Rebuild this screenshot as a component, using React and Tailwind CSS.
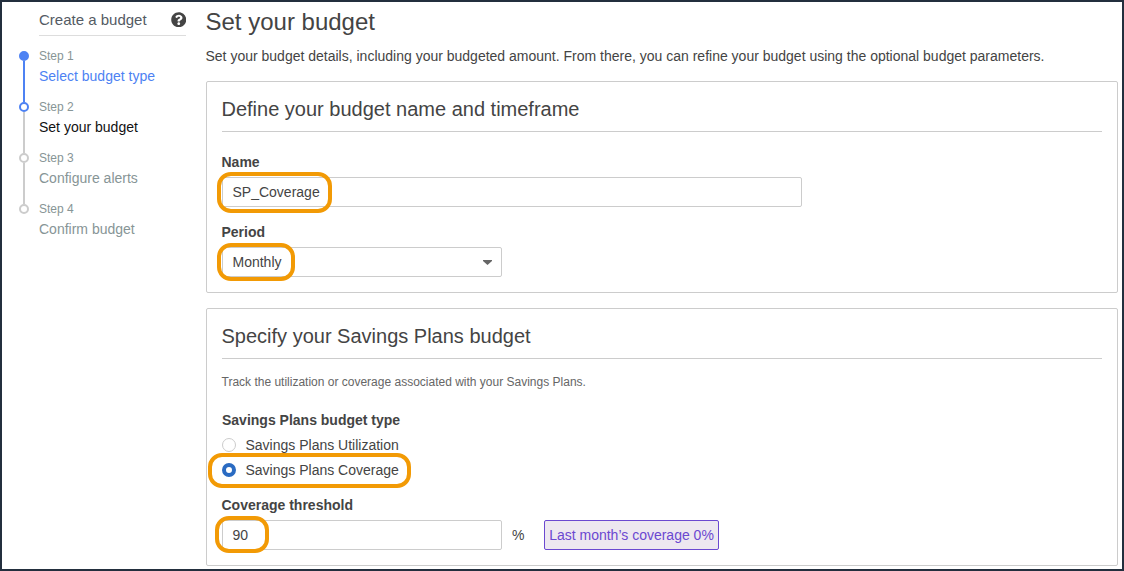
import { FaQuestionCircle } from "react-icons/fa";

const steps = [
  { label: "Step 1", title: "Select budget type", color: "text-[#4d82f3]", dot: "border-[#4d82f3] bg-[#4d82f3]", line: "bg-[#4d82f3]" },
  { label: "Step 2", title: "Set your budget", color: "text-[#111111]", dot: "border-[#4d82f3] bg-white", line: "bg-[#cccccc]" },
  { label: "Step 3", title: "Configure alerts", color: "text-[#879596]", dot: "border-[#cccccc] bg-white", line: "bg-[#cccccc]" },
  { label: "Step 4", title: "Confirm budget", color: "text-[#879596]", dot: "border-[#cccccc] bg-white", line: null },
];

function Highlight({ className }) {
  return <span className={`pointer-events-none absolute border-4 border-[#f29a05] ${className}`} />;
}

function Sidebar() {
  return (
    <aside className="w-[204px] shrink-0 pl-[17px] pr-5">
      <div className="ml-5 flex h-[34px] items-center justify-between border-b border-[#dddddd] pt-0.5 text-[15px] text-[#545b64]">
        <span>Create a budget</span>
        <FaQuestionCircle className="size-[15.5px] text-[#444444]" />
      </div>
      <ol className="mt-[11px]">
        {steps.map((s) => (
          <li key={s.label} className="flex h-[51px] gap-[10px]">
            <div className="flex w-[10px] flex-col items-center pt-1">
              <span className={`size-[10px] shrink-0 rounded-full border-2 ${s.dot}`} />
              {s.line && <span className={`-mb-1 w-0.5 flex-1 ${s.line}`} />}
            </div>
            <div className="whitespace-nowrap">
              <div className="text-xs leading-[18px] text-[#879596]">{s.label}</div>
              <div className={`text-sm leading-[22px] ${s.color}`}>{s.title}</div>
            </div>
          </li>
        ))}
      </ol>
    </aside>
  );
}

function Panel({ title, className, children }) {
  return (
    <section className={`rounded-[2px] border border-[#cccccc] px-[15px] ${className}`}>
      <h2 className="flex h-[50px] items-center border-b border-[#cccccc] pt-[5px] text-xl text-[#444444]">
        <span className="-ml-[0.5px]">{title}</span>
      </h2>
      {children}
    </section>
  );
}

function Radio({ checked, children }) {
  return (
    <div className="flex h-[25px] items-center gap-[9.5px]">
      <span
        className={
          checked
            ? "size-[14px] rounded-full border-4 border-[#2a6bc2] bg-white"
            : "size-[14px] rounded-full border border-[#cccccc] bg-white"
        }
      />
      <span>{children}</span>
    </div>
  );
}

const field = "relative flex h-[30px] items-center rounded-[2px] border border-[#cccccc] pl-[9.5px]";

export default function App() {
  return (
    <div className="flex h-[571px] w-[1124px] overflow-hidden border-2 border-[#232f3e] bg-white font-['Liberation_Sans',Arial,sans-serif] text-sm text-[#444444]">
      <Sidebar />
      <main className="w-[912px] shrink-0">
        <h1 className="-ml-[0.5px] pt-0.5 text-2xl leading-9">Set your budget</h1>
        <p className="-ml-[0.5px] mt-1.5 whitespace-nowrap leading-5">
          Set your budget details, including your budgeted amount. From there, you can refine your budget using the
          optional budget parameters.
        </p>

        <Panel title="Define your budget name and timeframe" className="mt-[15px] h-[212px]">
          <div className="-ml-[0.5px] mt-5 font-bold leading-5">Name</div>
          <div className={`${field} mt-[5px] w-[580px]`}>
            SP_Coverage
            <Highlight className="-left-[6px] -top-[6px] h-[41px] w-[115px] rounded-[14px]" />
          </div>
          <div className="-ml-[0.5px] mt-[15px] font-bold leading-5">Period</div>
          <div className={`${field} mt-[5px] w-[280px] justify-between pr-[9px]`}>
            Monthly
            <svg className="h-[5px] w-[9px] text-[#666666]" viewBox="0 0 9 5" fill="currentColor">
              <path d="M0 0h9v1L4.5 5 0 1z" />
            </svg>
            <Highlight className="-left-[6px] -top-[5px] h-[38px] w-[78px] rounded-[14px]" />
          </div>
        </Panel>

        <Panel title="Specify your Savings Plans budget" className="mt-[15px] h-[258px]">
          <p className="-ml-[0.5px] mt-[14px] text-xs leading-[18px] text-[#666666]">
            Track the utilization or coverage associated with your Savings Plans.
          </p>
          <div className="mt-[19px] font-bold leading-5">Savings Plans budget type</div>
          <div className="relative mt-0.5">
            <Radio>Savings Plans Utilization</Radio>
            <Radio checked>Savings Plans Coverage</Radio>
            <Highlight className="-left-[14px] top-[21px] h-[35px] w-[203px] rounded-[14px]" />
          </div>
          <div className="-ml-[0.5px] mt-[13px] font-bold leading-5">Coverage threshold</div>
          <div className="mt-[5px] flex items-center">
            <div className={`${field} w-[280px]`}>
              90
              <Highlight className="-left-2 -top-[5px] h-[37px] w-[54px] rounded-[14px]" />
            </div>
            <span className="ml-[10px] w-8">%</span>
            <span className="flex h-[30px] w-[175px] items-center justify-center whitespace-nowrap rounded-[2px] border border-[#6b48d0] bg-[#ede7f0] text-[#6b48d0]">
              Last month’s coverage 0%
            </span>
          </div>
        </Panel>
      </main>
    </div>
  );
}
